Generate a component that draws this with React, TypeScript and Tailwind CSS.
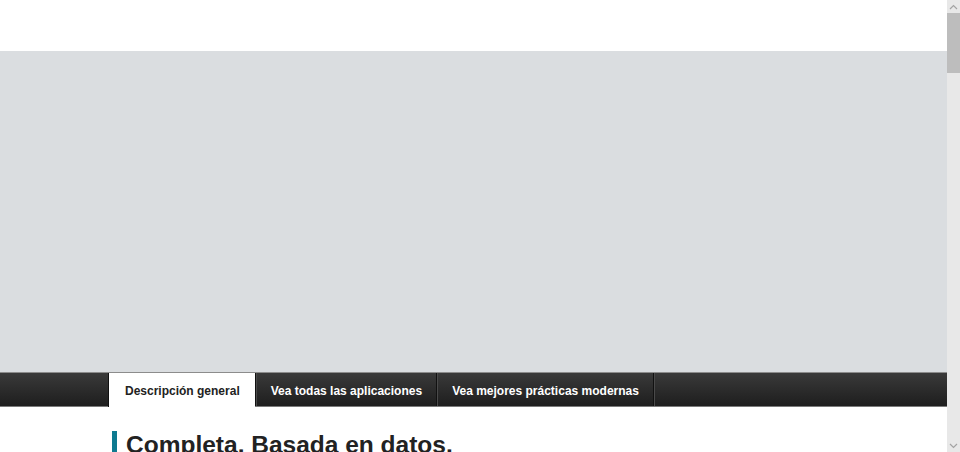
import React from 'react';

const tabs = ['Descripción general', 'Vea todas las aplicaciones', 'Vea mejores prácticas modernas'];

function Tab({ label, active }: { label: string; active?: boolean }) {
  if (active) {
    return (
      <div className="flex items-center h-[calc(100%+1px)] pl-4 pr-[15px] pt-[2px] bg-white text-[#222] border-l border-[#111] relative z-10">
        {label}
      </div>
    );
  }
  return (
    <div className="flex items-center h-full pl-[15px] pr-[14px] pt-[2px] text-white border-l border-[#111] shadow-[inset_1px_0_0_#4a4a4a]">
      {label}
    </div>
  );
}

function Scrollbar() {
  return (
    <div className="w-[13px] shrink-0 h-full bg-[#e8e8e8] flex flex-col items-center">
      <div className="h-[13px] w-full flex items-center justify-center">
        <svg width="9" height="6" viewBox="0 0 9 6" fill="none" stroke="#a3a3a3" strokeWidth="1.2">
          <path d="M1 5 L4.5 1.5 L8 5" />
        </svg>
      </div>
      <div className="w-full h-[60px] bg-[#bdbdbd]" />
      <div className="flex-1" />
      <div className="h-[13px] w-full flex items-center justify-center">
        <svg width="9" height="6" viewBox="0 0 9 6" fill="none" stroke="#a3a3a3" strokeWidth="1.2">
          <path d="M1 1 L4.5 4.5 L8 1" />
        </svg>
      </div>
    </div>
  );
}

export default function App() {
  return (
    <div className="flex h-[452px] w-[960px] overflow-hidden bg-white font-['Liberation_Sans',Arial,sans-serif]">
      <div className="flex-1 flex flex-col min-w-0">
        {/* header */}
        <div className="h-[51px] bg-white shrink-0" />
        {/* hero banner */}
        <div className="h-[321px] bg-[#dadde0] shrink-0" />
        {/* tab bar */}
        <div className="h-[35px] shrink-0 bg-gradient-to-b from-[#3a3a3a] to-[#1e1e1e] border-t border-[#8c8c8c] border-b border-b-[#7a7a7a]">
          <div className="flex items-start h-full pl-[108px] text-[12px] font-bold">
            <Tab label={tabs[0]} active />
            <Tab label={tabs[1]} />
            <Tab label={tabs[2]} />
            <div className="h-full border-l border-[#111] shadow-[inset_1px_0_0_#4a4a4a] w-2" />
          </div>
        </div>
        {/* content */}
        <div className="pl-[112px] pt-[24px]">
          <div className="flex items-start gap-[9px]">
            <div className="w-[5px] h-[40px] bg-[#0e7a90] shrink-0" />
            <h1 className="text-[24.5px] leading-[30px] font-bold text-[#222] -mt-px">Completa. Basada en datos.</h1>
          </div>
        </div>
      </div>
      <Scrollbar />
    </div>
  );
}
